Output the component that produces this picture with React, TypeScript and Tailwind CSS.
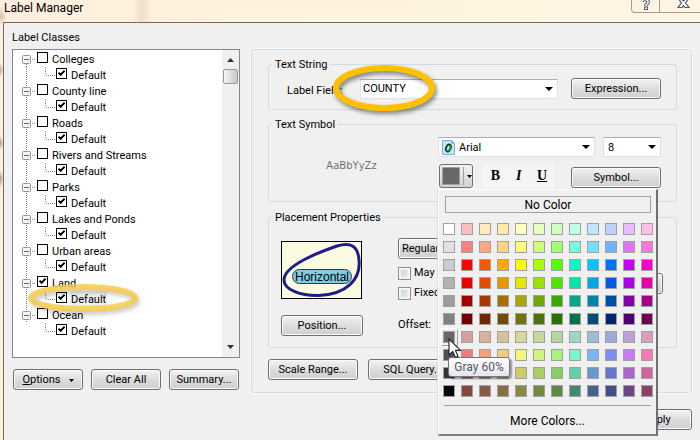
import React from "react";

const layers = [
  { name: "Colleges", on: false },
  { name: "County line", on: false },
  { name: "Roads", on: false },
  { name: "Rivers and Streams", on: false },
  { name: "Parks", on: false },
  { name: "Lakes and Ponds", on: false },
  { name: "Urban areas", on: false },
  { name: "Land", on: true, marked: true },
  { name: "Ocean", on: false },
];

const palette = [
  "ffffff ffbebe ffebbe ffebaf ffffbe e9ffbe d3ffbe beffe8 bee8ff bed2ff e8beff ffbee8",
  "e1e1e1 ff7f7f ffa77f ffd37f ffff73 d1ff73 a3ff73 73ffdf 73dfff 73b2ff df73ff ff73df",
  "cccccc ff0000 ff5500 ffaa00 ffff00 aaff00 55ff00 00ffc5 00c5ff 0070ff c500ff ff00c5",
  "b2b2b2 e60000 e64c00 e69800 e6e600 98e600 4ce600 00e6a9 00a9e6 005ce6 a900e6 e600a9",
  "9c9c9c a80000 a83800 a87000 a8a800 70a800 38a800 00a884 0084a8 004da8 8400a8 a80084",
  "828282 730000 732600 734c00 737300 4c7300 267300 00734c 004c73 002673 4c0073 73004c",
  "686868 d79e9e d7b09e d7c29e d7d79e c7d79e b4d79e 9ed7c2 9ebbd7 9eaad7 c29ed7 d69dbc",
  "4e4e4e f57a7a f5a27a f5ca7a f5f57a cdf57a a5f57a 7af5ca 7ab6f5 7a8ef5 ca7af5 f57ab6",
  "343434 cd6666 cd8966 cdaa66 cdcd66 abcd66 89cd66 66cdab 6699cd 6677cd ab66cd cd6699",
  "000000 894444 895a44 897044 898944 738944 5c8944 448970 446589 444f89 704489 894465",
].flatMap((row) => row.split(" "));

const SELECTED = 72;

function Caret({ className = "" }: { className?: string }) {
  return (
    <svg width="8" height="4" viewBox="0 0 8 4" className={"pointer-events-none shrink-0 " + className}>
      <path d="M0 0h8L4 4z" fill="#000" />
    </svg>
  );
}

function PushButton({ children, className = "" }: { children: React.ReactNode; className?: string }) {
  return (
    <button
      type="button"
      className={
        "flex h-[21px] shrink-0 items-center justify-center whitespace-nowrap rounded-[3px] border border-[#707070] bg-linear-to-b from-[#f3f3f3] from-0% via-[#dddddd] via-50% to-[#cfcfcf] pt-px shadow-[inset_0_0_0_1px_#fafafa] " +
        className
      }
    >
      {children}
    </button>
  );
}

function TreeCheck({ checked, marked = false, label }: { checked: boolean; marked?: boolean; label: string }) {
  return (
    <label className="flex items-center gap-[3px]">
      <span className="mb-[3px] grid">
        <input
          type="checkbox"
          defaultChecked={checked}
          className="peer size-[11px] appearance-none border border-black bg-white [grid-area:1/1]"
        />
        <svg viewBox="0 0 11 11" className="pointer-events-none invisible size-[11px] [grid-area:1/1] peer-checked:visible">
          <path d="M2.6 4.6 4.6 6.8 8.6 2.6" fill="none" stroke="#000" strokeWidth="2" />
        </svg>
      </span>
      <span className={marked ? "bg-[#f0f0f0] px-px pt-px leading-[15px]" : "px-px pt-px leading-[15px]"}>{label}</span>
    </label>
  );
}

function Tree() {
  return (
    <ul className="flex-1 pl-[5px] pt-px">
      {layers.map((l, i) => (
        <li key={l.name}>
          <div className="flex h-4 items-center">
            <svg width="19" height="16" viewBox="0 0 19 16" className="shrink-0">
              <path
                d={i === 0 ? "M8.5 13v3" : "M8.5 0v16"}
                stroke="#808080"
                strokeDasharray="1 1"
              />
              <path d="M14 8.5h4" stroke="#808080" strokeDasharray="1 1" />
              <rect x="4.5" y="4.5" width="8" height="8" rx="1" fill="#f4f4f4" stroke="#949494" />
              <path d="M6 8.5h5" stroke="#4b63a7" />
            </svg>
            <TreeCheck checked={l.on} label={l.name} />
          </div>
          <div className="relative flex h-4 items-center">
            <svg width="38" height="16" viewBox="0 0 38 16" className="shrink-0">
              {i < layers.length - 1 && <path d="M8.5 0v16" stroke="#808080" strokeDasharray="1 1" />}
              <path d="M27.5 0v8M28 8.5h9" stroke="#808080" strokeDasharray="1 1" fill="none" />
            </svg>
            <TreeCheck checked marked={l.marked} label="Default" />
            {l.marked && (
              <svg
                width="118"
                height="36"
                viewBox="0 0 118 36"
                className="pointer-events-none absolute -top-[7px] left-[9px] drop-shadow-[2px_3px_2px_rgba(0,0,0,0.25)]"
              >
                <ellipse cx="56" cy="14" rx="52" ry="11" fill="none" stroke="#f8cc45" strokeOpacity="0.8" strokeWidth="6" />
              </svg>
            )}
          </div>
        </li>
      ))}
    </ul>
  );
}

function ScrollBar() {
  return (
    <div className="flex w-[17px] flex-col items-center bg-[#f0f0f0]">
      <svg width="7" height="4" viewBox="0 0 7 4" className="mt-2">
        <path d="M3.5 0 7 4H0z" fill="#333" />
      </svg>
      <div className="mt-[7px] h-[15px] w-[15px] rounded-[2px] border border-[#979797] bg-linear-to-r from-[#f5f5f5] to-[#c8c8c8]" />
      <svg width="7" height="4" viewBox="0 0 7 4" className="mb-2 mt-auto">
        <path d="M0 0h7L3.5 4z" fill="#333" />
      </svg>
    </div>
  );
}

function Group({ title, className, inner, children }: { title: string; className: string; inner: string; children: React.ReactNode }) {
  return (
    <fieldset className={"min-w-0 rounded-[3px] border border-[#d0dbe4] " + className}>
      <legend className="ml-[3px] px-[3px] pt-px leading-[15px]">{title}</legend>
      <div className={inner}>{children}</div>
    </fieldset>
  );
}

function Combo({ label, value, className, pad }: { label: string; value: string; className: string; pad: string }) {
  return (
    <div className={"grid h-5 items-center " + className}>
      <select
        aria-label={label}
        className={
          "h-5 w-full min-w-0 appearance-none border border-[#dde2ea] border-t-[#abadb3] bg-white pt-px leading-4 [grid-area:1/1] " + pad
        }
      >
        <option>{value}</option>
      </select>
      <Caret className="mr-[5px] justify-self-end [grid-area:1/1]" />
    </div>
  );
}

function DialogCheck({ label }: { label: string }) {
  return (
    <label className="flex h-5 items-center gap-[3px] whitespace-nowrap">
      <input
        type="checkbox"
        className="size-[13px] shrink-0 appearance-none border border-[#8e8f8f] bg-linear-to-br from-[#c4c9cf] to-[#f6f6f6] shadow-[inset_0_0_0_2px_#f4f4f4]"
      />
      {label}
    </label>
  );
}

function ColorMenu() {
  return (
    <div className="absolute -left-px top-full z-10 mt-px w-[220px] border-b-2 border-l border-r-2 border-t border-b-[#808080] border-l-white border-r-[#707070] border-t-white bg-[#f0f0f0] pb-[3px] pt-1.5 shadow-[-1px_0_0_#dcdcdc]">
      <button type="button" className="mx-1.5 mb-2.5 block h-[17px] w-[206px] border border-[#a0a0a0] text-center text-[12px] leading-[16px]">
        No Color
      </button>
      <div className="relative grid grid-cols-12 gap-1.5 pl-1 pr-[3px]">
        {palette.map((c, i) => (
          <button
            key={i}
            type="button"
            aria-label={"#" + c}
            className={
              i === SELECTED
                ? "size-3 border border-[#a0a0a0] shadow-[0_0_0_2px_#f0f0f0,-1px_-1px_0_2px_#ffffff,1px_1px_0_2px_#a0a0a0]"
                : "size-3 border border-[#a0a0a0]"
            }
            style={{ backgroundColor: "#" + c }}
          />
        ))}
        <svg width="14" height="21" viewBox="0 0 14 21" className="pointer-events-none absolute left-[9px] top-[115px] z-20">
          <path d="M1 1v16l3.8-3.6 2.6 6 2.6-1.2-2.6-5.8H12.5z" fill="#fff" stroke="#1c1c30" strokeWidth="1.1" />
        </svg>
        <div
          role="tooltip"
          className="absolute left-[9px] top-[134px] h-5 w-[62px] rounded-[3px] border border-[#767676] bg-linear-to-b from-white to-[#e4e5f0] text-center text-[12px] leading-[18px] text-[#575757] shadow-[2px_2px_2px_rgba(0,0,0,0.4)]"
        >
          Gray 60%
        </div>
      </div>
      <hr className="mx-[5px] mt-2 border-t border-[#a0a0a0]" />
      <button type="button" className="mt-[5px] block h-5 w-full text-center text-[12px]">
        More Colors...
      </button>
    </div>
  );
}

function TextString() {
  return (
    <Group title="Text String" className="h-[54px]" inner="pl-[18px] pr-[15px] pt-1.5">
      <div className="relative flex items-center">
        <span className="w-[73px] shrink-0 pt-1">Label Field:</span>
        <Combo label="Label Field" value="COUNTY" className="flex-1" pad="pl-[2px]" />
        <PushButton className="ml-[13px] w-[90px]">Expression...</PushButton>
        <svg
          width="112"
          height="58"
          viewBox="0 0 112 58"
          className="pointer-events-none absolute -top-[15px] left-[43px] drop-shadow-[2px_3px_2px_rgba(0,0,0,0.45)]"
        >
          <ellipse cx="54" cy="25" rx="48" ry="20" fill="none" stroke="#ffc000" strokeWidth="6" />
        </svg>
      </div>
    </Group>
  );
}

function TextSymbol() {
  return (
    <Group title="Text Symbol" className="mt-1.5 h-[86px]" inner="pr-[15px] pt-[5px]">
      <div className="flex">
        <div className="flex h-[58px] flex-1 items-center justify-center pr-1 text-[10px] text-[#707070] [font-family:'DejaVu_Sans',sans-serif]">
          AaBbYyZz
        </div>
        <div className="w-[223px] shrink-0">
          <div className="flex gap-2">
            <div className="grid flex-1 items-center">
              <Combo label="Font" value="Arial" className="[grid-area:1/1]" pad="pl-5" />
              <svg width="13" height="15" viewBox="0 0 13 15" className="pointer-events-none ml-1 [grid-area:1/1]">
                <path d="M.5.5h9l3 3v11H.5z" fill="#c9e4fa" stroke="#7daedb" />
                <path d="M9.5.5v3h3z" fill="#4b9be8" />
                <ellipse cx="6.4" cy="8" rx="2.3" ry="3.6" transform="rotate(22 6.4 8)" fill="none" stroke="#064a18" strokeWidth="1.8" />
                <path d="M8.3 5.4Q9 8 6.5 11.3" fill="none" stroke="#1f9a34" strokeWidth="1.6" />
              </svg>
            </div>
            <Combo label="Size" value="8" className="w-[58px]" pad="pl-1" />
          </div>
          <div className="mt-[7px] flex">
            <div className="relative ml-px">
              <button
                type="button"
                aria-label="Color"
                className="flex h-6 w-[34px] items-center rounded-[3px] border border-[#707070] bg-linear-to-b from-[#f3f3f3] to-[#d2d2d2] pl-0.5"
              >
                <span className="size-[18px] border border-[#a0a0a0] bg-[#686868]" />
                <span className="ml-[3px] h-[18px] w-px bg-[#a0a0a0]" />
                <svg width="5" height="3" viewBox="0 0 5 3" className="ml-[3px]">
                  <path d="M0 0h5L2.500 3z" />
                </svg>
              </button>
              <ColorMenu />
            </div>
            <div className="ml-2.5 flex h-6 w-[72px] items-center justify-around bg-[#f5f5f5] text-[14px] font-bold [font-family:'Liberation_Serif',serif]">
              <button type="button">B</button>
              <button type="button" className="italic">I</button>
              <button type="button" className="underline">U</button>
            </div>
            <PushButton className="ml-auto mt-[3px] w-[90px]">Symbol...</PushButton>
          </div>
        </div>
      </div>
    </Group>
  );
}

function Placement() {
  return (
    <Group title="Placement Properties" className="mt-[7px] h-[139px]" inner="pl-3 pr-[13px] pt-[13px]">
      <div className="flex">
        <div className="w-[117px] shrink-0 pt-[3px]">
          <svg width="81" height="58" viewBox="0 0 81 58">
            <rect x=".5" y=".5" width="80" height="57" fill="#fafbe1" stroke="#000" />
            <path
              d="M3 39C3 26 30 14 56 5C70 1 77 5 78 19C80 38 66 53 38 54.500C20 55 3 49 3 39Z"
              fill="none"
              stroke="#1c1c8c"
              strokeWidth="3"
            />
            <rect x="11.500" y="28.500" width="59" height="14" rx="7" fill="#7fcce2" stroke="#2c3e44" />
            <text x="41" y="40" textAnchor="middle" fontSize="12" fontFamily="Liberation Sans, sans-serif">
              Horizontal
            </text>
          </svg>
          <PushButton className="mt-4 w-[82px]">Position...</PushButton>
        </div>
        <div className="min-w-0 flex-1">
          <PushButton className="w-[180px] !justify-start pl-[3px]">Regular placement</PushButton>
          <div className="mt-1 flex items-center">
            <div className="flex-1">
              <DialogCheck label="May place outside" />
              <DialogCheck label="Fixed size" />
            </div>
            <PushButton className="w-[90px]">Options</PushButton>
          </div>
          <div className="mt-3.5">Offset:</div>
        </div>
      </div>
    </Group>
  );
}

export default function App() {
  return (
    <div className="flex h-screen flex-col overflow-hidden bg-[radial-gradient(7px_9px_at_0_16px,#d9bdae,transparent),radial-gradient(4px_7px_at_0_70px,#c9a79a,transparent),radial-gradient(4px_7px_at_0_143px,#b8968c,transparent),radial-gradient(4px_9px_at_0_179px,#b8968c,transparent),linear-gradient(to_right,#fdeedd,#fff2dd_15%,#fff5e2)] text-[11px] leading-4 text-black [font-family:Roboto,Tahoma,sans-serif]">
      <header className="flex h-[22px] shrink-0 bg-linear-to-r from-transparent from-[132px] via-[#f0dccd] via-[142px] to-transparent to-[152px] pl-1">
        <h1 className="flex-1 text-[12px]">Label Manager</h1>
        <div className="flex h-[13px] w-[69px] rounded-bl-[4px] border-b border-l border-[#a59c90]">
          <button type="button" aria-label="Help" className="flex w-7 justify-center border-r border-[#a59c90]">
            <svg width="11" height="10" viewBox="0 0 11 10">
              <path d="M2 1Q5-2 8 1Q9 3 6 5V6" fill="none" stroke="#535666" strokeWidth="3.400" />
              <path d="M2 1Q5-2 8 1Q9 3 6 5V6" fill="none" stroke="#fff" strokeWidth="1.400" />
              <rect x="4.500" y="7" width="3" height="2.500" fill="#fff" stroke="#535666" />
            </svg>
          </button>
          <button type="button" aria-label="Close" className="flex flex-1 justify-center pl-1.5">
            <svg width="13" height="9" viewBox="0 0 13 9">
              <path d="M1 7.500H5L6.500 5.500L8 7.500H12L8.500 3L11-.5H8L6.500 1L5-.5H2L4.500 3Z" fill="#fff" stroke="#535666" strokeWidth="1.200" />
            </svg>
          </button>
        </div>
      </header>
      <main className="ml-[3px] flex min-h-0 flex-1 gap-[11px] border-l border-t border-[#716b60] bg-[#f0f0f0] pl-2 pr-2">
        <section className="w-[228px] shrink-0 pt-1.5">
          <h2 className="pt-px leading-[15px]">Label Classes</h2>
          <div className="mt-1 flex h-[309px] border border-[#828790] bg-white">
            <Tree />
            <ScrollBar />
          </div>
          <div className="mt-[11px] flex gap-2 pl-px">
            <PushButton className="w-[70px] gap-2">
              <span>
                <u>O</u>ptions
              </span>
              <svg width="5" height="3" viewBox="0 0 5 3">
                <path d="M0 0h5L2.500 3z" />
              </svg>
            </PushButton>
            <PushButton className="w-[70px]">Clear All</PushButton>
            <PushButton className="w-[70px]">Summary...</PushButton>
          </div>
        </section>
        <section className="min-w-0 flex-1 pt-[26px]">
          <div className="h-[344px] rounded-[3px] border border-[#d0dbe4] pl-4 pr-[14px] pt-1.5 shadow-[0_0_0_1px_#fcfcfc]">
            <TextString />
            <TextSymbol />
            <Placement />
            <div className="mt-[11px] flex gap-2.5">
              <PushButton className="w-[90px]">Scale Range...</PushButton>
              <PushButton className="w-[90px]">SQL Query...</PushButton>
            </div>
          </div>
          <PushButton className="ml-auto mt-4 w-[70px]">Apply</PushButton>
        </section>
      </main>
    </div>
  );
}
